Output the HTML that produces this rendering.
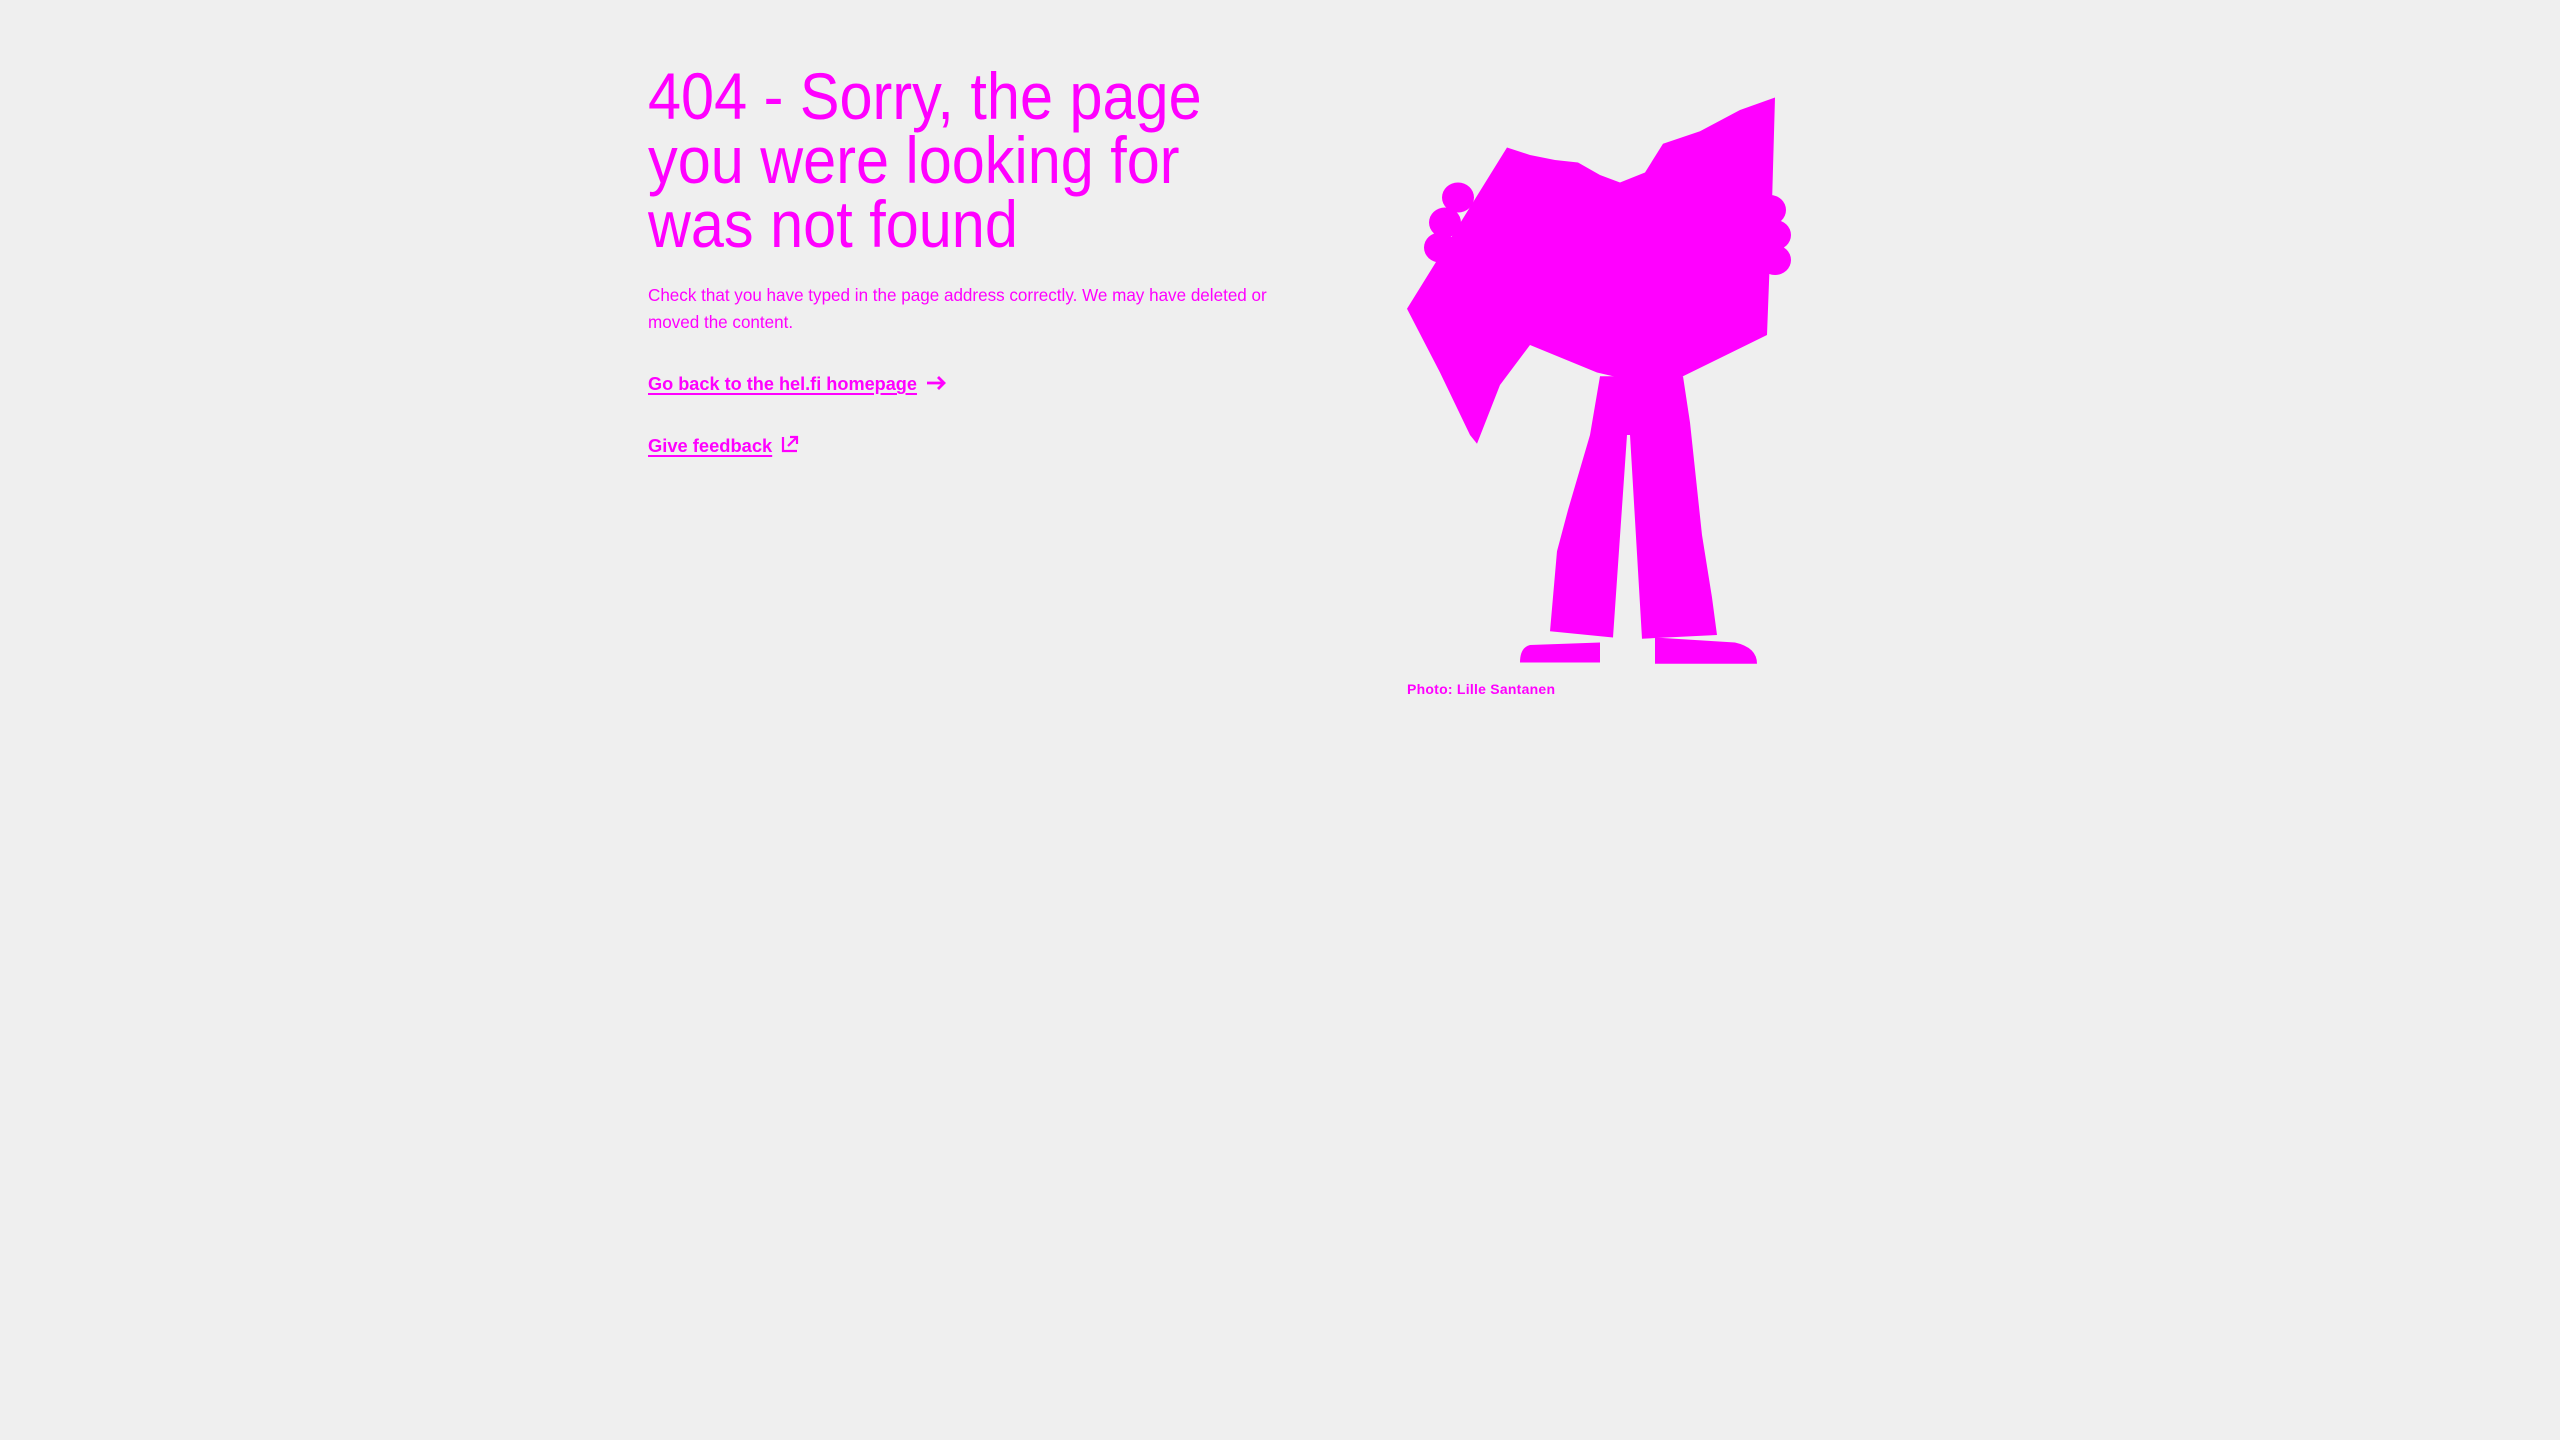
<!DOCTYPE html>
<html><head><meta charset="utf-8"><style>
html,body{margin:0;padding:0;background:#efefef;width:2560px;height:1440px;overflow:hidden}
body{font-family:"Liberation Sans",sans-serif;color:#ff00ff;position:relative}
.l{position:absolute;left:648px;white-space:nowrap;transform-origin:0 0}
h1{margin:0;font-weight:400;font-size:66px;line-height:64px}
.p{font-size:17.5px}
.a{font-weight:700;font-size:18.5px;text-decoration:underline;text-decoration-thickness:2px;text-underline-offset:3px}
</style></head><body>
<div class="l" style="top:64px;transform:scaleX(0.90)"><h1>404 - Sorry, the page<br>you were looking for<br>was not found</h1></div>
<div class="l p" style="top:285px;transform:scaleX(0.975)">Check that you have typed in the page address correctly. We may have deleted or</div>
<div class="l p" style="top:312px;transform:scaleX(0.975)">moved the content.</div>
<div class="l a" style="top:373px;transform:scaleX(0.98)">Go back to the hel.fi homepage</div>
<svg style="position:absolute;left:926px;top:374px" width="20" height="18" viewBox="0 0 20 18"><path d="M1 9H18M12 3L18 9L12 15" stroke="#ff00ff" stroke-width="2.8" fill="none"/></svg>
<div class="l a" style="top:435px;transform:scaleX(0.99)">Give feedback</div>
<svg style="position:absolute;left:781px;top:435px" width="18" height="18" viewBox="0 0 18 18"><path d="M2 2V16H16M7 11L16 2M9 2H16V9" stroke="#ff00ff" stroke-width="2.2" fill="none"/></svg>
<svg style="position:absolute;left:0;top:0" width="2560" height="1440">
<g fill="#ff00ff" transform="matrix(1 0 0 1.25 0 -15)">
<path d="M1407,259 L1507,130 L1530,136 L1555,140 L1578,142 L1600,152 L1620,158 L1645,150 L1663,127 L1700,117 L1740,100 L1775,90 L1772,175 L1767,280 L1683,313 L1640,318 L1597,310 L1530,288 L1500,320 L1477,367 L1470,360 L1440,310 Z"/>
<ellipse cx="1458" cy="170" rx="16" ry="12"/><ellipse cx="1445" cy="190" rx="16" ry="12"/><ellipse cx="1440" cy="210" rx="16" ry="12"/><ellipse cx="1462" cy="215" rx="20" ry="15"/>
<ellipse cx="1770" cy="180" rx="16" ry="12"/><ellipse cx="1775" cy="200" rx="16" ry="12"/><ellipse cx="1775" cy="220" rx="16" ry="12"/><ellipse cx="1755" cy="225" rx="14" ry="10"/>
<path d="M1600,313 L1683,313 L1690,350 L1702,440 L1712,490 L1717,520 L1642,523 L1630,360 L1627,360 L1613,522 L1550,517 L1557,453 L1568,420 L1590,360 Z"/>
<path d="M1530,528 L1600,526 L1600,542 L1520,542 Q1520,530 1530,528 Z"/>
<path d="M1655,522 L1735,526 Q1757,530 1757,543 L1655,543 Z"/>
</g>
<text x="1407" y="694" font-family="Liberation Sans" font-weight="700" font-size="14" fill="#ff00ff" textLength="148">Photo: Lille Santanen</text>
</svg>
</body></html>
